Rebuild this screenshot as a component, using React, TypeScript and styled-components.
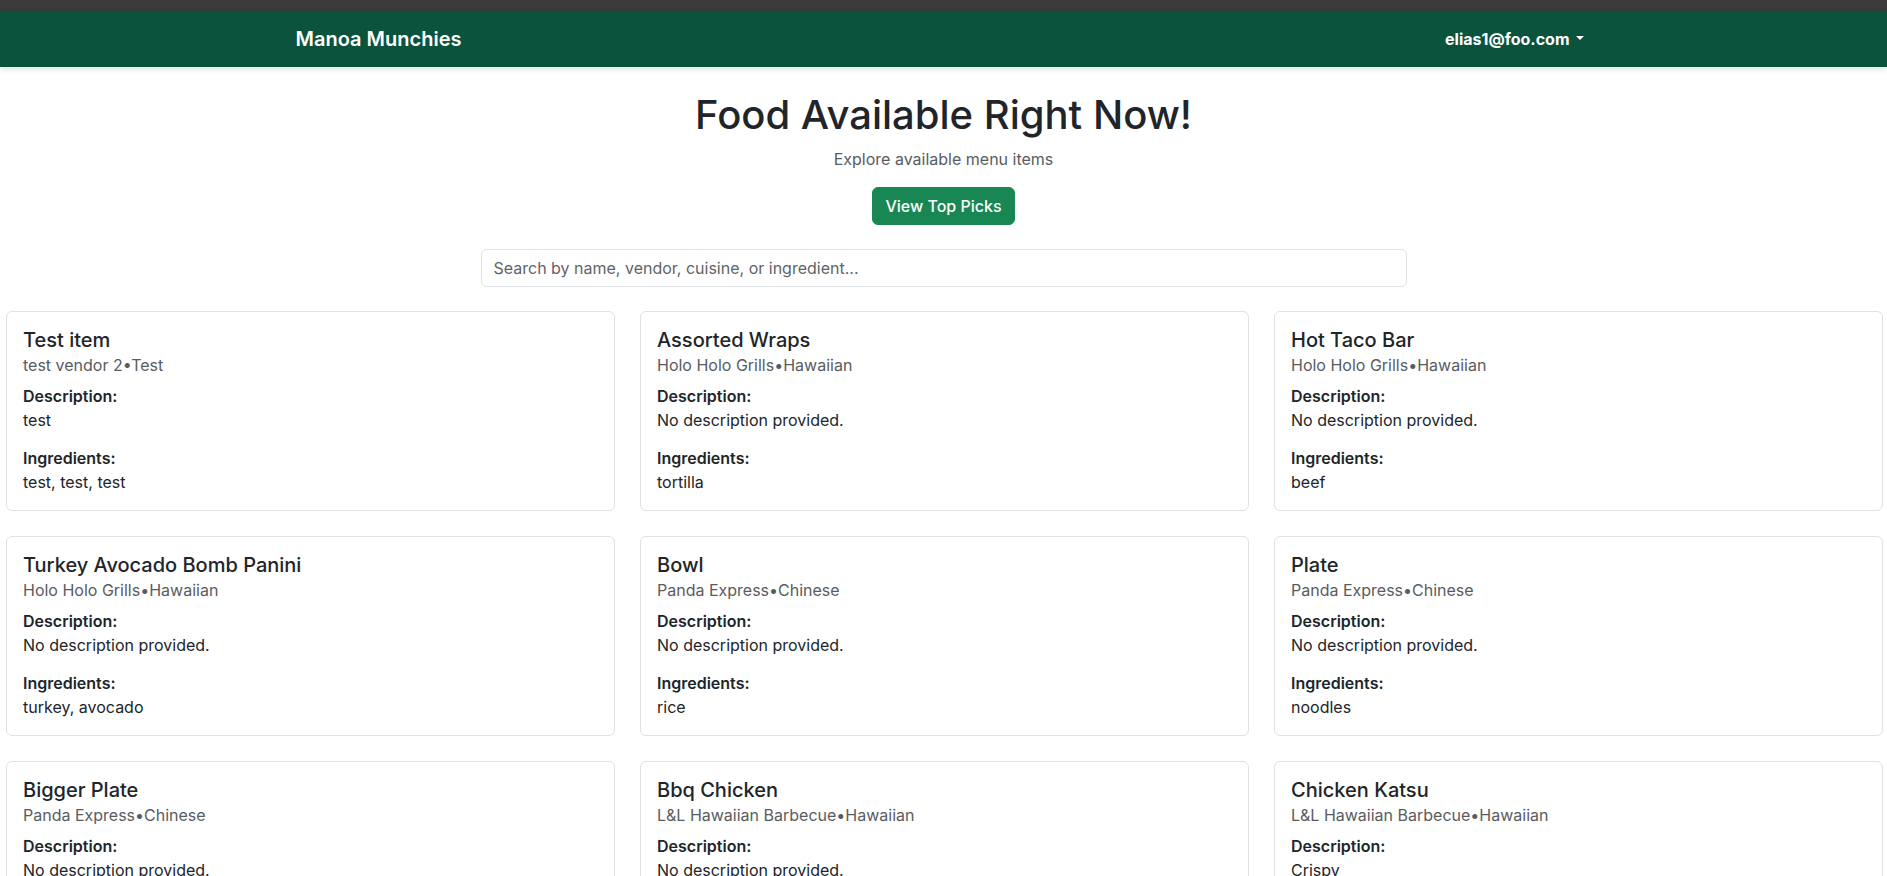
import React from "react";
import styled, { createGlobalStyle } from "styled-components";

const GlobalStyle = createGlobalStyle`
  html { scrollbar-width: none; }
  html::-webkit-scrollbar { display: none; }
  body {
    margin: 0;
    background: #ffffff;
    color: #212529;
    font-family: Inter, "Noto Sans", "Liberation Sans", sans-serif;
    font-size: 16px;
    line-height: 1.5;
  }
  * { box-sizing: border-box; }
`;

const TopStrip = styled.div`
  height: 11px;
  background: #3b3b3b;
`;

const NavBar = styled.nav`
  height: 56px;
  background: #0b533c;
  box-shadow: 0 2px 6px rgba(0, 0, 0, 0.12);
  position: relative;
  z-index: 1;
`;

const NavContainer = styled.div`
  max-width: 1320px;
  height: 100%;
  margin: 0 auto;
  padding: 0 12px;
  display: flex;
  align-items: center;
  justify-content: space-between;
`;

const Brand = styled.a`
  color: #ffffff;
  font-size: 20px;
  font-weight: 600;
  line-height: 1.5;
  text-decoration: none;
`;

const UserToggle = styled.a`
  color: #ffffff;
  font-size: 16px;
  font-weight: 700;
  padding: 8px;
  text-decoration: none;
  display: flex;
  align-items: center;
`;

const Caret = styled.span`
  display: inline-block;
  margin-left: 6px;
  width: 0;
  height: 0;
  border-top: 4.5px solid #ffffff;
  border-left: 4.5px solid transparent;
  border-right: 4.5px solid transparent;
  transform: translateY(-1px);
`;

const Main = styled.main`
  padding-top: 24px;
  display: flex;
  flex-direction: column;
  align-items: center;
`;

const Title = styled.h1`
  margin: 0 0 8px;
  font-size: 40px;
  font-weight: 500;
  line-height: 1.2;
  color: #212529;
`;

const Lead = styled.p`
  margin: 0 0 16px;
  color: #595c5f;
  font-size: 16px;
  line-height: 24px;
`;

const GreenButton = styled.button`
  font-family: inherit;
  font-size: 16px;
  font-weight: 500;
  line-height: 1.5;
  color: #ffffff;
  background: #198754;
  border: 1px solid #198754;
  border-radius: 6px;
  padding: 6px 12px;
  margin-bottom: 24px;
  cursor: pointer;
`;

const SearchInput = styled.input`
  width: 926px;
  height: 38px;
  font-family: inherit;
  font-size: 16px;
  color: #212529;
  padding: 6px 12px;
  border: 1px solid #dee2e6;
  border-radius: 6px;
  margin-bottom: 24px;
  outline: none;
  &::placeholder {
    color: #5f6368;
  }
`;

const CardGrid = styled.section`
  width: 100%;
  padding: 0 4px 0 6px;
  display: grid;
  grid-template-columns: repeat(3, 1fr);
  column-gap: 25px;
  row-gap: 25px;
`;

const Card = styled.article`
  border: 1px solid #dee2e6;
  border-radius: 6px;
  padding: 16px;
  background: #ffffff;
`;

const CardTitle = styled.h5`
  margin: 0;
  font-size: 20px;
  font-weight: 500;
  line-height: 24px;
  color: #212529;
`;

const CardSubtitle = styled.div`
  margin: 1px 0 7px;
  font-size: 16px;
  line-height: 24px;
  color: #595c5f;
`;

const Label = styled.div`
  font-size: 16px;
  font-weight: 600;
  line-height: 24px;
`;

const Value = styled.p<{ $last?: boolean }>`
  margin: 0 0 ${(p) => (p.$last ? "0" : "14px")};
  font-size: 16px;
  line-height: 24px;
`;

type Item = {
  name: string;
  vendor: string;
  cuisine: string;
  description: string;
  ingredients: string;
};

const items: Item[] = [
  { name: "Test item", vendor: "test vendor 2", cuisine: "Test", description: "test", ingredients: "test, test, test" },
  { name: "Assorted Wraps", vendor: "Holo Holo Grills", cuisine: "Hawaiian", description: "No description provided.", ingredients: "tortilla" },
  { name: "Hot Taco Bar", vendor: "Holo Holo Grills", cuisine: "Hawaiian", description: "No description provided.", ingredients: "beef" },
  { name: "Turkey Avocado Bomb Panini", vendor: "Holo Holo Grills", cuisine: "Hawaiian", description: "No description provided.", ingredients: "turkey, avocado" },
  { name: "Bowl", vendor: "Panda Express", cuisine: "Chinese", description: "No description provided.", ingredients: "rice" },
  { name: "Plate", vendor: "Panda Express", cuisine: "Chinese", description: "No description provided.", ingredients: "noodles" },
  { name: "Bigger Plate", vendor: "Panda Express", cuisine: "Chinese", description: "No description provided.", ingredients: "rice, noodles" },
  { name: "Bbq Chicken", vendor: "L&L Hawaiian Barbecue", cuisine: "Hawaiian", description: "No description provided.", ingredients: "chicken" },
  { name: "Chicken Katsu", vendor: "L&L Hawaiian Barbecue", cuisine: "Hawaiian", description: "Crispy", ingredients: "chicken, panko" },
];

export default function App() {
  return (
    <>
      <GlobalStyle />
      <TopStrip />
      <NavBar>
        <NavContainer>
          <Brand href="#">Manoa Munchies</Brand>
          <UserToggle href="#">
            elias1@foo.com
            <Caret />
          </UserToggle>
        </NavContainer>
      </NavBar>
      <Main>
        <Title>Food Available Right Now!</Title>
        <Lead>Explore available menu items</Lead>
        <GreenButton>View Top Picks</GreenButton>
        <SearchInput placeholder="Search by name, vendor, cuisine, or ingredient..." />
        <CardGrid>
          {items.map((it) => (
            <Card key={it.name}>
              <CardTitle>{it.name}</CardTitle>
              <CardSubtitle>
                {it.vendor}•{it.cuisine}
              </CardSubtitle>
              <Label>Description:</Label>
              <Value>{it.description}</Value>
              <Label>Ingredients:</Label>
              <Value $last>{it.ingredients}</Value>
            </Card>
          ))}
        </CardGrid>
      </Main>
    </>
  );
}
